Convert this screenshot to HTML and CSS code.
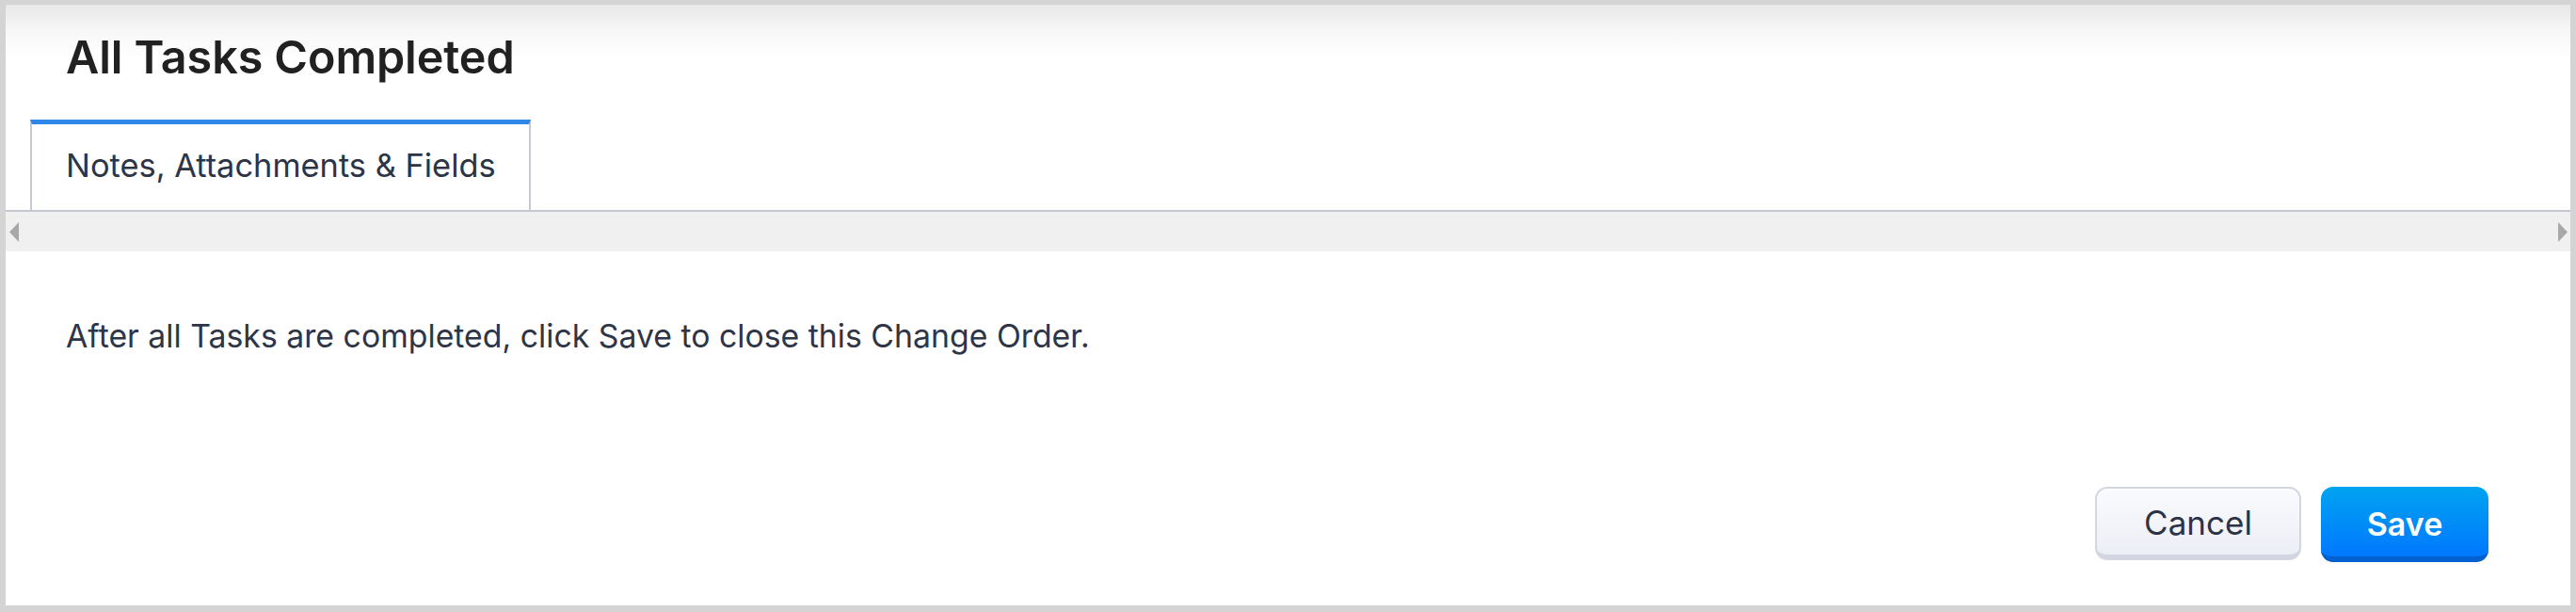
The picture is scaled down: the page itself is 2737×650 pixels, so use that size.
FILE: index.html
```html
<!DOCTYPE html>
<html lang="en">
<head>
<meta charset="utf-8">
<title>All Tasks Completed</title>
<link rel="stylesheet" href="styles.css">
</head>
<body>
<div class="frame">
  <div class="panel">
    <header class="header">
      <h1 class="title">All Tasks Completed</h1>
    </header>
    <nav class="tabs">
      <div class="tab tab-active">Notes, Attachments &amp; Fields</div>
    </nav>
    <div class="scroller">
      <svg class="arrow" width="10" height="21" viewBox="0 0 10 21"><polygon points="10,0 10,21 0,10.5" fill="#a8a8a8"/></svg>
      <svg class="arrow" width="10" height="21" viewBox="0 0 10 21"><polygon points="0,0 0,21 10,10.5" fill="#a8a8a8"/></svg>
    </div>
    <section class="content">
      <p class="message">After all Tasks are completed, click Save to close this Change Order.</p>
    </section>
    <footer class="footer">
      <button class="btn btn-cancel">Cancel</button>
      <button class="btn btn-save">Save</button>
    </footer>
  </div>
</div>
</body>
</html>
```
FILE: styles.css
```css
html, body {
  margin: 0;
  padding: 0;
  height: 100%;
}
body {
  background: #d4d4d4;
  font-family: "Inter", "Noto Sans", sans-serif;
}
.frame {
  box-sizing: border-box;
  height: 650px;
  padding: 5px 6px 7px 6px;
  background: #d4d4d4;
}
.panel {
  height: 100%;
  background: #ffffff;
  display: flex;
  flex-direction: column;
}
.header {
  padding: 26px 0 0 64px;
  background: linear-gradient(to bottom, #e8e8e8 0px, #f8f8f8 30px, #ffffff 60px);
}
.title {
  margin: 0;
  font-size: 48.5px;
  line-height: 60px;
  font-weight: 600;
  color: #212121;
  letter-spacing: -0.1px;
}
.tabs {
  display: flex;
  margin-top: 36px;
  padding-left: 26px;
  border-bottom: 2px solid #c3c7cf;
}
.tab {
  box-sizing: border-box;
  width: 532px;
  padding: 23px 0 27px 36px;
  font-size: 34.4px;
  line-height: 41px;
  color: #2c3446;
}
.tab-active {
  border-top: 5px solid #2f87e8;
  border-left: 2px solid #c6cad4;
  border-right: 2px solid #c6cad4;
  background: #ffffff;
}
.scroller {
  height: 42px;
  background: #f0f0f0;
  display: flex;
  align-items: center;
  justify-content: space-between;
  padding: 0 3px 0 4px;
}
.arrow {
  display: block;
}
.content {
  padding: 69px 0 0 64px;
}
.message {
  margin: 0;
  font-size: 33.8px;
  line-height: 41px;
  color: #2e3546;
}
.footer {
  display: flex;
  justify-content: flex-end;
  align-items: flex-start;
  gap: 21px;
  margin-top: 140px;
  padding-right: 87px;
}
.btn {
  box-sizing: border-box;
  font-family: "Inter", "Noto Sans", sans-serif;
  border-radius: 13px;
  cursor: pointer;
  padding: 0;
}
.btn-cancel {
  width: 219px;
  height: 78px;
  border: 2px solid #d3d6e0;
  border-bottom-width: 6px;
  background: linear-gradient(to bottom, #fafbfd, #eceef6);
  color: #2b3344;
  font-size: 35px;
  font-weight: 400;
  padding-top: 2px;
}
.btn-save {
  width: 178px;
  height: 80px;
  border: none;
  border-bottom: 6px solid #0060cf;
  background: linear-gradient(to bottom, #00a3f1, #0078fe);
  color: #ffffff;
  font-size: 34px;
  font-weight: 600;
  padding-top: 4px;
}
```
